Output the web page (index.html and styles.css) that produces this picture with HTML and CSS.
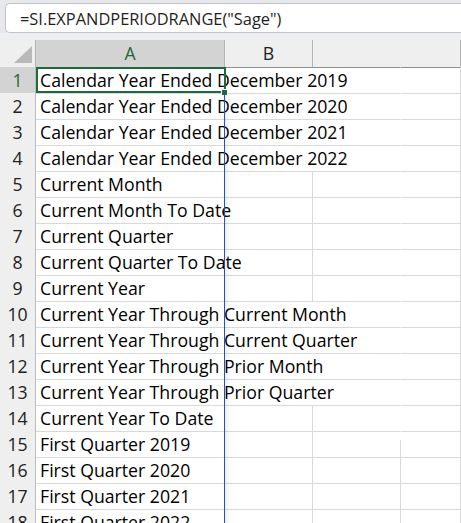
FILE: index.html
```html
<!DOCTYPE html>
<html>
<head>
<meta charset="utf-8">
<link rel="stylesheet" href="styles.css">
</head>
<body>
<div class="sheet">
  <div class="fbar">
    <div class="fbox">=SI.EXPANDPERIODRANGE("Sage")</div>
  </div>
  <div class="fgap"></div>
  <div class="row hdr">
    <div class="rh corner"><span class="tri"></span></div>
    <div class="c a sel-col">A</div>
    <div class="c b">B</div>
    <div class="c cc nb"></div>
    <div class="c d"></div>
  </div>
  <div class="grid">
    <div class="row"><div class="rh sel-row">1</div><div class="c a nb"><span class="t">Calendar Year Ended December 2019</span><span class="selbox"></span><span class="handle"></span></div><div class="c b nb"></div><div class="c cc nb"></div><div class="c d"></div></div>
    <div class="row"><div class="rh">2</div><div class="c a nb"><span class="t">Calendar Year Ended December 2020</span></div><div class="c b nb"></div><div class="c cc nb"></div><div class="c d"></div></div>
    <div class="row"><div class="rh">3</div><div class="c a nb"><span class="t">Calendar Year Ended December 2021</span></div><div class="c b nb"></div><div class="c cc nb"></div><div class="c d"></div></div>
    <div class="row"><div class="rh">4</div><div class="c a nb"><span class="t">Calendar Year Ended December 2022</span></div><div class="c b nb"></div><div class="c cc nb"></div><div class="c d"></div></div>
    <div class="row"><div class="rh">5</div><div class="c a"><span class="t">Current Month</span></div><div class="c b"></div><div class="c cc nb"></div><div class="c d"></div></div>
    <div class="row"><div class="rh">6</div><div class="c a nb"><span class="t">Current Month To Date</span></div><div class="c b"></div><div class="c cc nb"></div><div class="c d"></div></div>
    <div class="row"><div class="rh">7</div><div class="c a"><span class="t">Current Quarter</span></div><div class="c b"></div><div class="c cc nb"></div><div class="c d"></div></div>
    <div class="row"><div class="rh">8</div><div class="c a nb"><span class="t">Current Quarter To Date</span></div><div class="c b"></div><div class="c cc nb"></div><div class="c d"></div></div>
    <div class="row"><div class="rh">9</div><div class="c a"><span class="t">Current Year</span></div><div class="c b"></div><div class="c cc nb"></div><div class="c d"></div></div>
    <div class="row"><div class="rh">10</div><div class="c a nb"><span class="t">Current Year Through Current Month</span></div><div class="c b nb"></div><div class="c cc nb"></div><div class="c d"></div></div>
    <div class="row"><div class="rh">11</div><div class="c a nb"><span class="t">Current Year Through Current Quarter</span></div><div class="c b nb"></div><div class="c cc nb"></div><div class="c d"></div></div>
    <div class="row"><div class="rh">12</div><div class="c a nb"><span class="t">Current Year Through Prior Month</span></div><div class="c b nb"></div><div class="c cc nb"></div><div class="c d"></div></div>
    <div class="row"><div class="rh">13</div><div class="c a nb"><span class="t">Current Year Through Prior Quarter</span></div><div class="c b nb"></div><div class="c cc nb"></div><div class="c d"></div></div>
    <div class="row"><div class="rh">14</div><div class="c a"><span class="t">Current Year To Date</span></div><div class="c b"></div><div class="c cc nb"></div><div class="c d"></div></div>
    <div class="row"><div class="rh">15</div><div class="c a"><span class="t">First Quarter 2019</span></div><div class="c b"></div><div class="c cc nb part"></div><div class="c d"></div></div>
    <div class="row"><div class="rh">16</div><div class="c a"><span class="t">First Quarter 2020</span></div><div class="c b"></div><div class="c cc"></div><div class="c d"></div></div>
    <div class="row"><div class="rh">17</div><div class="c a"><span class="t">First Quarter 2021</span></div><div class="c b"></div><div class="c cc"></div><div class="c d"></div></div>
    <div class="row"><div class="rh">18</div><div class="c a"><span class="t">First Quarter 2022</span></div><div class="c b"></div><div class="c cc"></div><div class="c d"></div></div>
    <div class="bline"></div>
  </div>
</div>
</body>
</html>
```
FILE: styles.css
```css
html, body {
  margin: 0;
  padding: 0;
  background: #ffffff;
  overflow: hidden;
}
.sheet {
  width: 461px;
  height: 523px;
  overflow: hidden;
  font-family: "Open Sans", "Noto Sans", sans-serif;
  color: #000;
}
.fbar {
  background: #e6e8ec;
  padding-top: 3px;
  padding-left: 5px;
}
.fbox {
  height: 28px;
  background: #fff;
  border: 1px solid #c4c4c4;
  border-right: none;
  border-radius: 5px 0 0 5px;
  font-size: 16.4px;
  line-height: 30px;
  padding-left: 14px;
  color: #1f1f1f;
  white-space: nowrap;
}
.fgap {
  height: 7px;
  background: #eceef2;
}
.row {
  display: grid;
  grid-template-columns: 36px 189px 88px 88px 1fr;
  height: 26px;
}
.rh {
  box-sizing: border-box;
  background: #efefef;
  border-right: 1px solid #bdbdbd;
  border-bottom: 1px solid #c9c9c9;
  text-align: center;
  font-size: 17.7px;
  line-height: 26px;
  color: #222;
}
.rh.sel-row {
  background: #d3d3d3;
  color: #1d6b3a;
}
.c {
  box-sizing: border-box;
  border-bottom: 1px solid #d9d9d9;
  border-right: 1px solid #d9d9d9;
  position: relative;
  font-size: 17.7px;
  line-height: 26px;
  white-space: nowrap;
}
.c.nb {
  border-right-color: transparent;
}
.c .t {
  position: relative;
  z-index: 2;
  padding-left: 4px;
}
.hdr {
  height: 27px;
}
.hdr .rh, .hdr .c {
  background: #efefef;
  border-bottom: 1px solid #8f8f8f;
  border-right: 1px solid #b4b4b4;
  text-align: center;
  line-height: 27px;
  color: #222;
  font-size: 17.7px;
}
.hdr .c.nb {
  border-right-color: transparent;
}
.hdr .sel-col {
  background: #d3d3d3;
  color: #1d6b3a;
  border-bottom-color: #1d6b3a;
}
.hdr .corner {
  position: relative;
  border-bottom-color: #8f8f8f;
}
.tri {
  position: absolute;
  right: 3px;
  bottom: 4px;
  width: 0;
  height: 0;
  border-left: 18px solid transparent;
  border-bottom: 17px solid #b9b9b9;
}
.grid {
  position: relative;
}
.selbox {
  position: absolute;
  left: 0;
  top: 0;
  width: 190px;
  height: 26px;
  box-sizing: border-box;
  border: 2px solid #1d6b3a;
  z-index: 3;
}
.handle {
  position: absolute;
  left: 185px;
  top: 22px;
  width: 5px;
  height: 5px;
  background: #1d6b3a;
  border: 1px solid #fff;
  z-index: 4;
}
.part::after {
  content: "";
  position: absolute;
  right: -1px;
  top: 9px;
  bottom: -1px;
  width: 1px;
  background: #d9d9d9;
}
.bline {
  position: absolute;
  left: 224px;
  top: 27px;
  bottom: -40px;
  width: 7px;
  background: linear-gradient(to right, #1a55c8 0, #1a55c8 1px, rgba(0,0,0,0.06) 1px, rgba(0,0,0,0) 7px);
  z-index: 5;
}
```
